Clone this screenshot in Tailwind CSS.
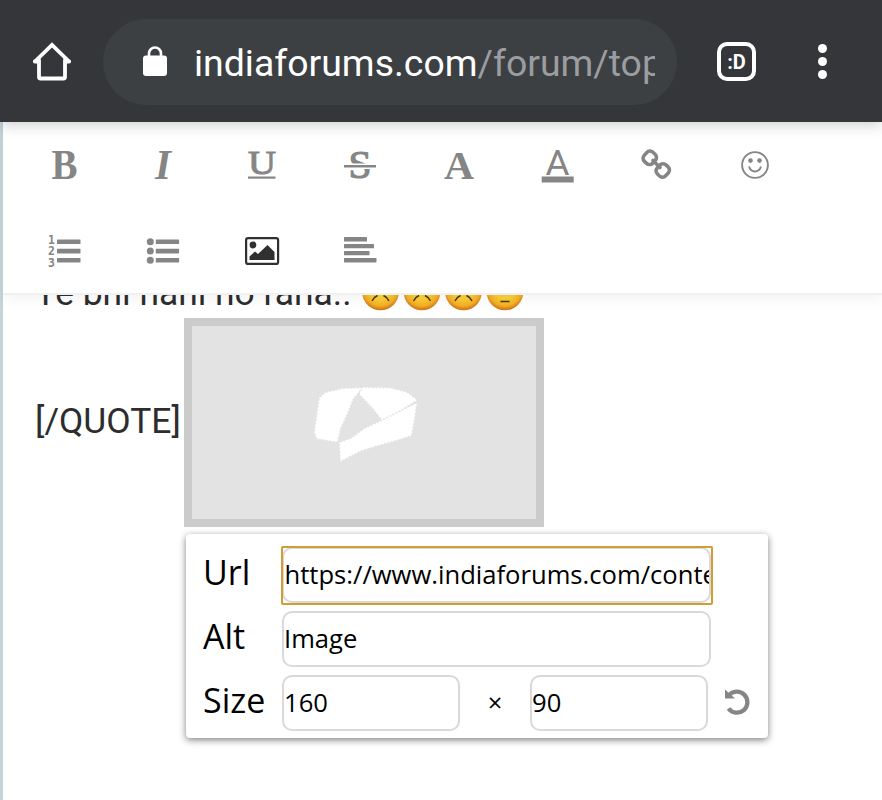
<!DOCTYPE html>
<html lang="en">
<head>
<meta charset="utf-8">
<title>India Forums</title>
<script src="https://cdn.jsdelivr.net/npm/@tailwindcss/browser@4"></script>
</head>
<body class="bg-white">
<div class="w-[882px] h-[800px] overflow-hidden flex flex-col bg-white relative">
  <header class="h-[122px] shrink-0 bg-[#35363a] flex items-center pl-[32px] pt-px relative z-20 shadow-[0_2px_14px_rgba(0,0,0,0.22)]">
    <svg class="w-10 h-10 shrink-0" viewBox="0 0 40 40" fill="none" stroke="#fff" stroke-width="3.8" stroke-linecap="round" stroke-linejoin="round"><path d="M3 19.5 20 2.8 37 19.5" stroke-linecap="butt" stroke-linejoin="miter"/><path d="M7 18V35a1.5 1.5 0 0 0 1.500 1.500H31.500a1.500 1.500 0 0 0 1.500-1.500V18M2.800 19.500H6.500M33.500 19.500H37.200"/></svg>
    <div class="ml-[31px] w-[574px] h-[86px] rounded-full bg-[#3c4043] flex items-center pl-[40px]">
      <svg class="w-6 h-[30px] shrink-0 -mt-px" viewBox="0 0 24 30"><rect y="9.500" width="24" height="20.500" rx="3" fill="#fff"/><path d="M6 11V7.500a6 6 0 0 1 12 0V11" fill="none" stroke="#fff" stroke-width="2.600"/></svg>
      <div class="ml-[27px] w-[461px] overflow-hidden whitespace-nowrap font-[Roboto,sans-serif] text-[37.4px] leading-[50px] mt-[3px] text-white"><span>indiaforums.com</span><span class="text-[#9b9da0]">/forum/topic</span></div>
    </div>
    <div class="ml-[40px] w-[39px] h-[39px] border-4 border-white rounded-[10px] flex items-center justify-center text-white font-[Roboto,sans-serif] font-bold text-[20px] leading-none">:D</div>
    <div class="ml-[62px] flex flex-col gap-[4px]"><i class="w-[9px] h-[9px] rounded-full bg-white"></i><i class="w-[9px] h-[9px] rounded-full bg-white"></i><i class="w-[9px] h-[9px] rounded-full bg-white"></i></div>
  </header>
  <div class="flex-1 border-l-[3px] border-[#c5d5da] flex flex-col min-h-0">
    <div class="h-[173px] shrink-0 bg-white border-b-2 border-[#f0f0f0] pl-[12px] relative z-10 shadow-[0_3px_14px_rgba(0,0,0,0.06)]">
      <div class="grid grid-cols-8 grid-rows-[86px_86px] w-[789px] place-items-center fill-[#858585] text-[#858585]">
        <svg class="w-14 h-14" viewBox="-8 -8 56 56"><text x="7.500" y="33.500" font-family="Liberation Serif, serif" font-weight="700" font-size="42" textLength="26" lengthAdjust="spacingAndGlyphs">B</text></svg>
        <svg class="w-14 h-14" viewBox="-8 -8 56 56"><text x="12" y="33.500" font-family="Liberation Serif, serif" font-weight="700" font-style="italic" font-size="42" textLength="16" lengthAdjust="spacingAndGlyphs">I</text></svg>
        <svg class="w-14 h-14" viewBox="-8 -8 56 56"><text x="6" y="28.500" font-family="Liberation Serif, serif" font-size="34" textLength="28" lengthAdjust="spacingAndGlyphs" stroke="#858585" stroke-width="1">U</text><rect x="6" y="31.500" width="27.500" height="2.200"/></svg>
        <svg class="w-14 h-14" viewBox="-8 -8 56 56"><text x="8.500" y="33" font-family="Liberation Serif, serif" font-size="40" textLength="23" lengthAdjust="spacingAndGlyphs" stroke="#858585" stroke-width="1.200">S</text><rect x="4" y="18.500" width="32" height="5.500" fill="#fff"/><rect x="4" y="20" width="32" height="2.500"/></svg>
        <svg class="w-14 h-14" viewBox="-8 -8 56 56"><text x="5" y="33.500" font-family="Liberation Serif, serif" font-weight="700" font-size="41" textLength="30" lengthAdjust="spacingAndGlyphs">A</text></svg>
        <svg class="w-14 h-14" viewBox="-8 -8 56 56"><text x="8.500" y="29.500" font-family="Roboto, sans-serif" font-size="34.500" textLength="24" lengthAdjust="spacingAndGlyphs">A</text><rect x="4.700" y="31.500" width="32" height="6"/></svg>
        <svg class="w-10 h-10" viewBox="0 0 40 40" fill="none" stroke="currentColor" stroke-width="3.600"><rect x="8" y="6.600" width="11.500" height="12.500" rx="4.300" transform="rotate(43 13.750 12.850)"/><rect x="21" y="19.200" width="11.500" height="12.500" rx="4.300" transform="rotate(43 26.750 25.450)"/><path d="m17 15.500 7 7" stroke-linecap="round"/></svg>
        <svg class="w-10 h-10" viewBox="0 0 40 40"><circle cx="20" cy="20" r="12.900" fill="none" stroke="currentColor" stroke-width="1.900"/><circle cx="15.500" cy="15.600" r="2.300"/><circle cx="24.500" cy="15.600" r="2.300"/><path d="M14.300 22.300a6 6 0 0 0 11.400 0" fill="none" stroke="currentColor" stroke-width="2" stroke-linecap="round"/></svg>
        <svg class="w-10 h-10" viewBox="0 0 40 40"><g font-family="DejaVu Sans Mono, monospace" font-weight="700" font-size="11.500"><text x="4" y="13">1</text><text x="4" y="24.300">2</text><text x="4" y="35.600">3</text></g><rect x="13" y="8.500" width="23.500" height="4.600" rx=".6"/><rect x="13" y="17.800" width="23.500" height="4.600" rx=".6"/><rect x="13" y="27" width="23.500" height="4.600" rx=".6"/></svg>
        <svg class="w-10 h-10" viewBox="0 0 40 40"><circle cx="7.300" cy="10.800" r="3.500"/><circle cx="7.300" cy="20.100" r="3.500"/><circle cx="7.300" cy="29.300" r="3.500"/><rect x="12.800" y="8.500" width="23.300" height="4.600" rx=".6"/><rect x="12.800" y="17.800" width="23.300" height="4.600" rx=".6"/><rect x="12.800" y="27" width="23.300" height="4.600" rx=".6"/></svg>
        <svg class="w-10 h-10" viewBox="0 0 40 40"><rect x="4.100" y="7.100" width="32" height="25.800" rx="2" fill="none" stroke="#303030" stroke-width="2.200"/><circle cx="11" cy="14" r="3.400" fill="#303030"/><path d="M7.500 29v-3.500L13 20.500l3 2.500 9.500-9 7 7V29Z" fill="#303030"/></svg>
        <svg class="w-10 h-10" viewBox="0 0 40 40"><rect x="4" y="6" width="23" height="4.500" rx=".6"/><rect x="4" y="13" width="30" height="4.300" rx=".6"/><rect x="4" y="20" width="25.500" height="4.300" rx=".6"/><rect x="4" y="26.900" width="32.500" height="4.500" rx=".6"/></svg>
      </div>
    </div>
    <main class="pl-[32px] font-[Roboto,sans-serif] text-[35.4px] text-[#2d2d2d]">
      <div class="h-[42px] -mt-[21px] flex items-center whitespace-nowrap leading-[42px]">
        <span class="w-[326px] -mt-[5px]">Ye bhi nahi ho raha..</span>
        <svg class="w-[164px] h-[38px] shrink-0 -mt-[6px]" viewBox="0 0 164 38">
          <defs><radialGradient id="face" cx=".5" cy=".4" r=".6"><stop offset=".5" stop-color="#fbcf35"/><stop offset=".8" stop-color="#f5ae26"/><stop offset="1" stop-color="#c96f14"/></radialGradient></defs>
          <g fill="url(#face)"><circle cx="19.500" cy="19" r="18.300"/><circle cx="61" cy="19" r="18.300"/><circle cx="102.500" cy="19" r="18.300"/><circle cx="144" cy="19" r="18.300"/></g>
          <g fill="none" stroke="#4b3511" stroke-width="1.400"><path d="M11 28q2-4 5.500-5.500M28 28q-2-4-5.500-5.500M52.500 28q2-4 5.500-5.500M69.500 28q-2-4-5.500-5.500M94 28q2-4 5.500-5.500M111 28q-2-4-5.500-5.500M139.500 28.500h9"/></g>
        </svg>
      </div>
      <div class="flex items-center mt-[2px]">
        <span class="w-[149px] leading-[40px] -mt-[4px]">[/QUOTE]</span>
        <div class="w-[360px] h-[209px] border-8 border-[#cbcbcb] bg-[#e3e3e3] flex justify-center items-center">
          <svg class="w-[104px] h-[75px] mt-[3px] ml-[4px]" viewBox="314 387 104 75"><g fill="#fff" stroke="#fff" stroke-width="1.600" stroke-linejoin="round" stroke-dasharray="2 1.500"><path d="M361 388.500 353 398 347 413 340 428 337 441.500 317 438 315 432 317 418 320 398 326 393 343 389Z"/><path d="M363 388 390 388.500 407 393 416 400 402 409 382 419 374 409 360 394Z"/><path d="M416 404 414 418 411 435 399 439 378 445 361 450 341 460.500 340 443 351 439 365 429 382 421Z"/></g></svg>
        </div>
      </div>
    </main>
  </div>

  <!-- Image properties popup -->
  <form class="absolute z-10 left-[186px] top-[534px] w-[582px] h-[204px] bg-white rounded-[4px] shadow-[0_2px_7px_rgba(0,0,0,0.5)] pt-[13px] pl-[17px] flex flex-col gap-[8px] font-['Open_Sans',sans-serif] text-black text-[25.6px]">
    <div class="h-[56px] flex"><label class="w-[79px] text-[34px] leading-[50px]">Url</label><div class="w-[429px] h-[56px] border-2 border-[#d9d9d9] rounded-[10px] relative"><div class="absolute -inset-[3.5px] border-[2.5px] border-[#d39c32] rounded-[2px]"></div><div class="overflow-hidden whitespace-nowrap leading-[51px] h-[52px] indent-[0.5px]">https://www.indiaforums.com/content</div></div></div>
    <div class="h-[56px] flex"><label class="w-[79px] text-[34px] leading-[50px]">Alt</label><div class="w-[429px] h-[56px] border-2 border-[#d9d9d9] rounded-[10px] leading-[52px]">Image</div></div>
    <div class="h-[56px] flex"><label class="w-[79px] text-[34px] leading-[50px]">Size</label><div class="w-[178px] h-[56px] border-2 border-[#d9d9d9] rounded-[10px] leading-[52px]">160</div><span class="w-[70px] text-center leading-[56px]">×</span><div class="w-[178px] h-[56px] border-2 border-[#d9d9d9] rounded-[10px] leading-[52px]">90</div>
      <svg class="w-[28px] h-[28px] ml-[15px] mt-[12px]" viewBox="0 0 28 28"><path d="M5.800 8.500A10.500 10.500 0 1 1 5.500 21.500" fill="none" stroke="#858585" stroke-width="4.300"/><path d="M2 2.500 12 11.500H2Z" fill="#858585"/></svg></div>
  </form>
</div>
</body>
</html>
